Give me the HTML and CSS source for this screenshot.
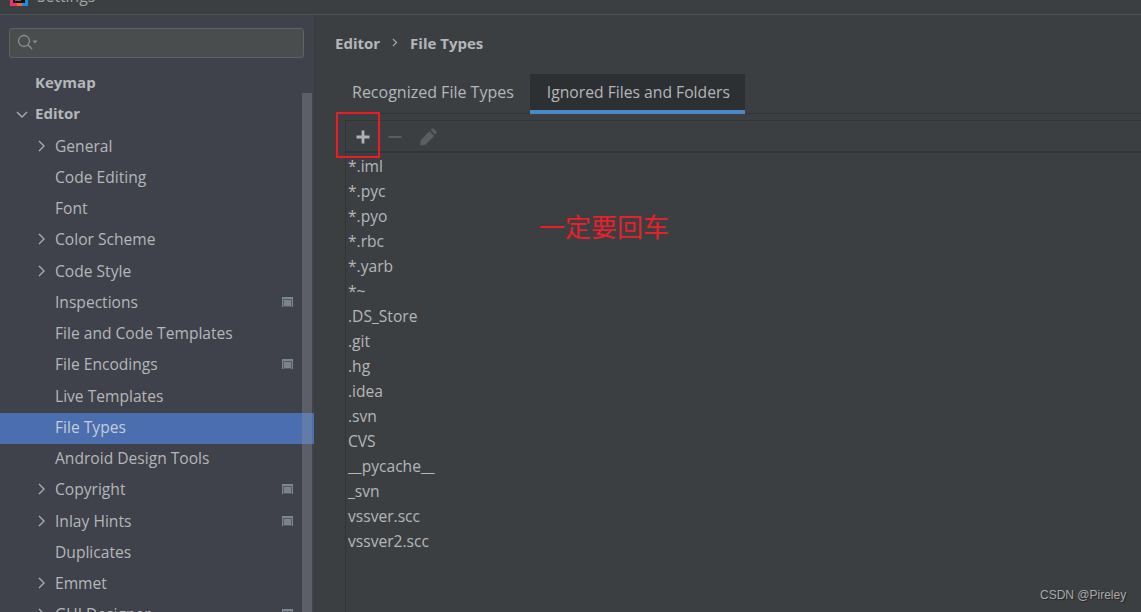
FILE: index.html
```html
<!DOCTYPE html>
<html lang="en">
<head>
<meta charset="utf-8">
<title>Settings</title>
<link rel="stylesheet" href="styles.css">
</head>
<body>
<div class="app">
  <header class="titlebar">
    <svg class="logo" width="18" height="14" viewBox="0 0 18 14"><rect width="18" height="14" fill="#f0672c"/><path d="M0 0h7v14H0z" fill="#e8326e"/><path d="M12 0h6v14h-6z" fill="#1c8be0"/><rect x="3" y="0" width="12" height="11" fill="#111"/><rect x="5" y="7" width="6" height="1.4" fill="#eee"/></svg>
    <span class="title">Settings</span>
  </header>
  <div class="main">
    <aside class="sidebar">
      <div class="search">
        <svg width="22" height="18" viewBox="0 0 22 18" fill="none" stroke="#8b8e90"><circle cx="7" cy="7" r="5.5" stroke-width="1.3"/><path d="M11 11l4 4" stroke-width="1.6"/><path d="M15.5 6.5h5l-2.5 3z" fill="#8b8e90" stroke="none"/></svg>
      </div>
      <nav class="tree">
        <div class="row top bold">Keymap</div>
        <div class="row top bold"><svg class="chev-top" width="14" height="10" viewBox="0 0 14 10" fill="none" stroke="#a8abad" stroke-width="1.4"><path d="M2 2l5 5 5-5"/></svg>Editor</div>
        <div class="row"><svg class="chev" width="10" height="14" viewBox="0 0 10 14" fill="none" stroke="#a8abad" stroke-width="1.4"><path d="M2 2l5 5-5 5"/></svg>General</div>
        <div class="row">Code Editing</div>
        <div class="row">Font</div>
        <div class="row"><svg class="chev" width="10" height="14" viewBox="0 0 10 14" fill="none" stroke="#a8abad" stroke-width="1.4"><path d="M2 2l5 5-5 5"/></svg>Color Scheme</div>
        <div class="row"><svg class="chev" width="10" height="14" viewBox="0 0 10 14" fill="none" stroke="#a8abad" stroke-width="1.4"><path d="M2 2l5 5-5 5"/></svg>Code Style</div>
        <div class="row">Inspections<span class="badge"></span></div>
        <div class="row">File and Code Templates</div>
        <div class="row">File Encodings<span class="badge"></span></div>
        <div class="row">Live Templates</div>
        <div class="row selected">File Types</div>
        <div class="row">Android Design Tools</div>
        <div class="row"><svg class="chev" width="10" height="14" viewBox="0 0 10 14" fill="none" stroke="#a8abad" stroke-width="1.4"><path d="M2 2l5 5-5 5"/></svg>Copyright<span class="badge"></span></div>
        <div class="row"><svg class="chev" width="10" height="14" viewBox="0 0 10 14" fill="none" stroke="#a8abad" stroke-width="1.4"><path d="M2 2l5 5-5 5"/></svg>Inlay Hints<span class="badge"></span></div>
        <div class="row">Duplicates</div>
        <div class="row"><svg class="chev" width="10" height="14" viewBox="0 0 10 14" fill="none" stroke="#a8abad" stroke-width="1.4"><path d="M2 2l5 5-5 5"/></svg>Emmet</div>
        <div class="row"><svg class="chev" width="10" height="14" viewBox="0 0 10 14" fill="none" stroke="#a8abad" stroke-width="1.4"><path d="M2 2l5 5-5 5"/></svg>GUI Designer<span class="badge"></span></div>
      </nav>
      <div class="scrollbar"></div>
    </aside>
    <section class="content">
      <div class="crumbs"><b>Editor</b><svg width="6" height="9" viewBox="0 0 6 9" fill="none" stroke="#a8abad" stroke-width="1.1"><path d="M1 1l3.5 3.5L1 8"/></svg><b>File Types</b></div>
      <div class="tabs">
        <div class="tab first">Recognized File Types</div>
        <div class="tab active">Ignored Files and Folders</div>
      </div>
      <div class="panel">
        <div class="toolbar">
          <svg class="tool" width="14" height="14" viewBox="0 0 14 14"><path d="M5.6 0.5h2.8v5.1h5.1v2.8H8.4v5.1H5.6V8.4H0.5V5.6h5.1z" fill="#afb1b3"/></svg>
          <svg class="tool" width="14" height="14" viewBox="0 0 14 14"><path d="M0.5 6h13v2H.5z" fill="#5b5e60"/></svg>
          <svg class="tool pencil" width="18" height="18" viewBox="0 0 18 18"><path d="M1 17.5l.8-5.5L10.5 3.300l4.700 4.700L6.500 16.700z" fill="#5b5e60"/><path d="M11.700 2.100l1.500-1.500a1 1 0 0 1 1.400 0l2.800 2.800a1 1 0 0 1 0 1.400l-1.500 1.500z" fill="#5b5e60"/></svg>
        </div>
        <ul class="files">
          <li>*.iml</li>
          <li>*.pyc</li>
          <li>*.pyo</li>
          <li>*.rbc</li>
          <li>*.yarb</li>
          <li>*~</li>
          <li>.DS_Store</li>
          <li>.git</li>
          <li>.hg</li>
          <li>.idea</li>
          <li>.svn</li>
          <li>CVS</li>
          <li>__pycache__</li>
          <li>_svn</li>
          <li>vssver.scc</li>
          <li>vssver2.scc</li>
        </ul>
      </div>
    </section>
  </div>
  <div class="redbox"></div>
  <div class="note">一定要回车</div>
  <div class="mark">CSDN @Pireley</div>
</div>
</body>
</html>
```
FILE: styles.css
```css
* { box-sizing: border-box; }
html, body { margin: 0; padding: 0; }
body { width: 1141px; height: 612px; overflow: hidden; background: #3c3f41; font-family: "Open Sans", "Noto Sans", sans-serif; font-size: 15.6px; color: #b4b7b9; }
.app { position: relative; width: 1141px; height: 612px; overflow: hidden; display: flex; flex-direction: column; }
.titlebar { height: 15px; flex: none; background: #3c3f41; border-bottom: 1px solid #4e5052; display: flex; align-items: flex-end; padding: 0 0 8px 10px; gap: 9px; overflow: hidden; }
.logo { flex: none; }
.title { font-size: 15.7px; line-height: 20px; color: #a0a3a5; flex: none; }
.main { flex: 1; display: flex; min-height: 0; }
.sidebar { position: relative; width: 314px; flex: none; background: #3f424a; padding-top: 13px; overflow: hidden; }
.search { width: 295px; height: 30px; margin-left: 9px; background: #4a4d4e; border: 1px solid #5f6262; border-radius: 3px; padding: 5px 0 0 7px; display: flex; }
.tree { margin-top: 11px; }
.row { position: relative; height: 31.25px; line-height: 28.6px; padding-left: 55px; white-space: nowrap; color: #b4b7b9; }
.row.top { padding-left: 35px; line-height: 27.6px; }
.bold { font-weight: 700; font-size: 15px; }
.row.selected { background: #4b6eaf; color: #c5ccd8; }
.chev { position: absolute; left: 37px; top: 7px; }
.chev-top { position: absolute; left: 15px; top: 10px; }
.badge { position: absolute; left: 282px; top: 9px; width: 11px; height: 10px; background: #7a8791; padding-top: 2px; }
.badge::after { content: ""; display: block; margin: 0 1px; height: 6px; background: #7b838b; border: 1px solid #555b63; }
.scrollbar { position: absolute; left: 302px; top: 78px; width: 10px; bottom: 0; background: rgba(140, 145, 155, 0.38); }
.content { flex: 1; min-width: 0; display: flex; flex-direction: column; background: #3c3f42; }
.crumbs { height: 59px; flex: none; padding: 0 0 4px 21px; display: flex; align-items: center; gap: 12px; color: #b4b7b9; font-size: 15px; }
.tabs { height: 40px; flex: none; display: flex; margin-left: 22px; border-bottom: 1px solid #323436; }
.tab { height: 40px; flex: none; padding: 0 16px; line-height: 37px; color: #b4b7b9; font-size: 15.7px; }
.tab.first { font-size: 16px; }
.tab.active { background: #2d3033; border-bottom: 4px solid #4a88c7; padding: 0 15px 0 17px; }
.panel { flex: 1; min-height: 0; margin: 6px 0 0 31px; border-left: 1px solid #323436; border-top: 1px solid #323436; }
.toolbar { height: 32px; border-bottom: 2px solid #323436; display: flex; align-items: center; padding: 1px 0 0 10px; gap: 18px; }
.pencil { margin-left: -1px; }
.files { list-style: none; margin: 0; padding: 1px 0 0 2px; }
.files li { height: 25px; line-height: 25.4px; }
.redbox { position: absolute; left: 336px; top: 112px; width: 44px; height: 46px; border: 2px solid #ed1c24; }
.note { position: absolute; left: 539px; top: 209px; font-family: "Noto Sans CJK SC", sans-serif; font-size: 26px; line-height: 34px; color: #e8202a; white-space: nowrap; }
.mark { position: absolute; left: 1040px; top: 587px; font-family: "Liberation Sans", sans-serif; font-size: 12px; line-height: 16px; color: #a9abac; white-space: nowrap; text-shadow: 1px 1px 1px #222; }
```
